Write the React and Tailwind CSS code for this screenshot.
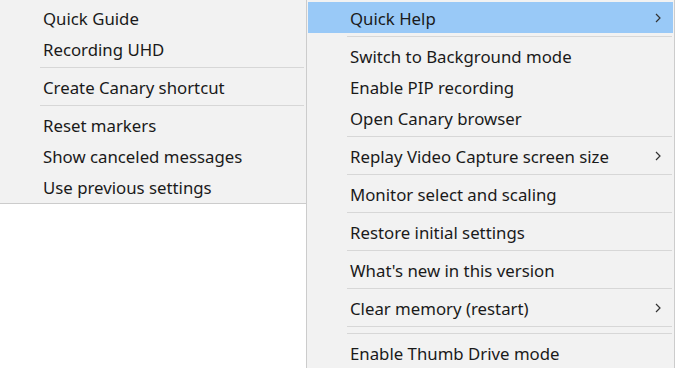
import React from 'react';

const leftItems = [
  { label: 'Quick Guide' },
  { label: 'Recording UHD' },
  { sep: true },
  { label: 'Create Canary shortcut' },
  { sep: true },
  { label: 'Reset markers' },
  { label: 'Show canceled messages' },
  { label: 'Use previous settings' },
];

const rightItems = [
  { label: 'Quick Help', sub: true, active: true },
  { sep: true },
  { label: 'Switch to Background mode' },
  { label: 'Enable PIP recording' },
  { label: 'Open Canary browser' },
  { sep: true },
  { label: 'Replay Video Capture screen size', sub: true },
  { sep: true },
  { label: 'Monitor select and scaling' },
  { sep: true },
  { label: 'Restore initial settings' },
  { sep: true },
  { label: "What's new in this version" },
  { sep: true },
  { label: 'Clear memory (restart)', sub: true },
  { sep: true },
  { sep: true },
  { label: 'Enable Thumb Drive mode' },
];

const Chevron = () => (
  <svg width="6" height="10" viewBox="0 0 6 10" className="text-[#333]">
    <path d="M1 1l4 4-4 4" fill="none" stroke="currentColor" strokeWidth="1.2" />
  </svg>
);

const MenuItems = ({ items }) => (
  <>
    {items.map((item, i) =>
      item.sep ? (
        <div key={i} className="h-[7px] flex items-center pl-[40px] pr-[2px]">
          <div className="h-px w-full bg-[#d7d7d7]" />
        </div>
      ) : (
        <div
          key={i}
          className={`h-[31px] flex items-center pl-[42px] pr-[12px] mx-px ${item.active ? 'bg-[#99c9f7]' : ''}`}
        >
          <span className="flex-1 whitespace-nowrap pt-[2px]">{item.label}</span>
          {item.sub && <Chevron />}
        </div>
      )
    )}
  </>
);

export default function App() {
  return (
    <div
      className="w-[675px] h-[368px] bg-white flex items-start overflow-hidden text-[16.8px] text-[#1a1a1a]"
      style={{ fontFamily: '"Noto Sans", "Open Sans", sans-serif' }}
    >
      <div className="w-[306px] shrink-0 bg-[#f2f2f2] border-b border-[#cccccc] pt-[2px] pb-px">
        <MenuItems items={leftItems} />
      </div>
      <div className="w-[369px] shrink-0 h-[400px] bg-[#f2f2f2] border-l border-r border-[#cccccc] pt-[2px]">
        <MenuItems items={rightItems} />
      </div>
    </div>
  );
}
